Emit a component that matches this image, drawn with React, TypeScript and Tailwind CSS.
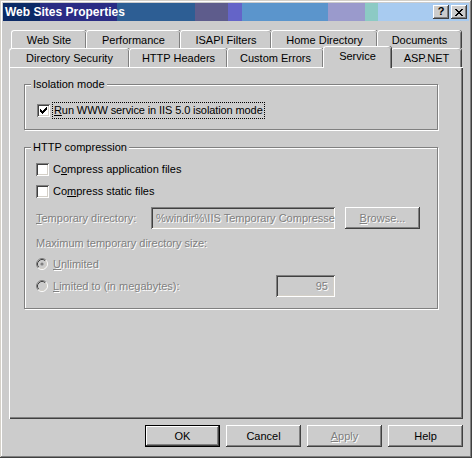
const face = "bg-[#cccccc]";
const raised =
  "shadow-[inset_-1px_-1px_0_#404040,inset_1px_1px_0_#ffffff,inset_-2px_-2px_0_#808080]";
const sunken =
  "shadow-[inset_1px_1px_0_#808080,inset_-1px_-1px_0_#ffffff,inset_2px_2px_0_#404040,inset_-2px_-2px_0_#d4d0c8]";
const disabledText = "text-[#808080] [text-shadow:1px_1px_0_#ffffff]";

function CheckMark() {
  const px = [
    [6, 0], [5, 1], [6, 1], [0, 2], [4, 2], [5, 2], [6, 2],
    [0, 3], [1, 3], [3, 3], [4, 3], [5, 3],
    [0, 4], [1, 4], [2, 4], [3, 4], [4, 4],
    [1, 5], [2, 5], [3, 5], [2, 6],
  ];
  return (
    <svg width="7" height="7" viewBox="0 0 7 7" shapeRendering="crispEdges">
      {px.map(([x, y]) => (
        <rect key={`${x}-${y}`} x={x} y={y} width="1" height="1" fill="#000" />
      ))}
    </svg>
  );
}

function Checkbox({ checked }: { checked?: boolean }) {
  return (
    <div className={`w-[13px] h-[13px] bg-white ${sunken} flex items-center justify-center shrink-0`}>
      {checked && <CheckMark />}
    </div>
  );
}

function Radio({ dot }: { dot?: boolean }) {
  return (
    <svg width="12" height="12" viewBox="0 0 12 12" className="shrink-0">
      <circle cx="6" cy="6" r="4.5" fill="#cccccc" />
      <path d="M2.11 9.89 A5.5 5.5 0 0 1 9.89 2.11" fill="none" stroke="#808080" />
      <path d="M9.89 2.11 A5.5 5.5 0 0 1 2.11 9.89" fill="none" stroke="#ffffff" />
      <path d="M2.82 9.18 A4.5 4.5 0 0 1 9.18 2.82" fill="none" stroke="#404040" />
      <path d="M9.18 2.82 A4.5 4.5 0 0 1 2.82 9.18" fill="none" stroke="#d4d0c8" />
      {dot && <circle cx="6" cy="6" r="1.6" fill="#808080" />}
    </svg>
  );
}

function Tab({ label, w }: { label: string; w: string }) {
  return (
    <div
      className={`${w} h-full rounded-t-[3px] border-t border-l border-white shadow-[inset_-1px_0_0_#808080,1px_0_0_#404040] flex justify-center pt-[3px] whitespace-nowrap`}
    >
      {label}
    </div>
  );
}

function Group({ title, h, children }: { title: string; h: string; children: React.ReactNode }) {
  return (
    <div
      className={`relative w-[414px] ${h} border border-[#808080] shadow-[inset_1px_1px_0_#ffffff,1px_1px_0_#ffffff]`}
    >
      <span className={`absolute -top-[8px] left-[6px] px-[2px] ${face} leading-[14px]`}>{title}</span>
      {children}
    </div>
  );
}

function Button({ children, isDefault, disabled }: { children: React.ReactNode; isDefault?: boolean; disabled?: boolean }) {
  return (
    <div
      className={`w-[75px] h-[22px] flex items-center justify-center ${
        isDefault
          ? "border border-black shadow-[inset_-1px_-1px_0_#404040,inset_1px_1px_0_#ffffff,inset_-2px_-2px_0_#808080]"
          : raised
      } ${disabled ? disabledText : ""}`}
    >
      {children}
    </div>
  );
}

export default function App() {
  return (
    <div
      className={`w-[472px] h-[458px] ${face} p-[3px] flex flex-col text-black text-[11px] leading-[13px] shadow-[inset_-1px_-1px_0_#404040,inset_1px_1px_0_#d4d0c8,inset_-2px_-2px_0_#808080,inset_2px_2px_0_#ffffff]`}
      style={{ fontFamily: '"Liberation Sans", Arial, sans-serif' }}
    >
      {/* title bar */}
      <div className="h-[18px] flex items-center pl-[2px] pr-[2px] bg-[linear-gradient(90deg,#0b2a66_0px,#0b2a66_37px,#2a2c84_37px,#2a2c84_114px,#2d5e94_114px,#2d5e94_192px,#5e5c8c_192px,#5e5c8c_225px,#6464c8_225px,#6464c8_239px,#5b95cc_239px,#5b95cc_325px,#9a9acc_325px,#9a9acc_362px,#8ccac4_362px,#8ccac4_375px,#a8cbf0_375px)]">
        <span className="font-bold text-white text-[12px]">Web Sites Properties</span>
        <div className="ml-auto flex gap-[2px]">
          <div className={`w-[16px] h-[14px] ${face} ${raised} flex items-center justify-center font-bold text-[11px] leading-none pb-[1px]`}>
            ?
          </div>
          <div className={`w-[16px] h-[14px] ${face} ${raised} flex items-center justify-center`}>
            <svg width="8" height="7" viewBox="0 0 8 7" shapeRendering="crispEdges">
              <path d="M0 0h2v1h-2zM6 0h2v1h-2zM1 1h2v1h-2zM5 1h2v1h-2zM2 2h4v1h-4zM3 3h2v1h-2zM2 4h4v1h-4zM1 5h2v1h-2zM5 5h2v1h-2zM0 6h2v1h-2zM6 6h2v1h-2z" fill="#000" />
            </svg>
          </div>
        </div>
      </div>

      {/* tabs */}
      <div className="mt-[9px] ml-[8px] flex h-[18px]">
        <Tab label="Web Site" w="w-[75px]" />
        <Tab label="Performance" w="w-[94px]" />
        <Tab label="ISAPI Filters" w="w-[91px]" />
        <Tab label="Home Directory" w="w-[106px]" />
        <Tab label="Documents" w="w-[84px]" />
      </div>
      <div className="ml-[6px] flex items-start h-[19px]">
        <Tab label="Directory Security" w="w-[120px]" />
        <Tab label="HTTP Headers" w="w-[98px]" />
        <Tab label="Custom Errors" w="w-[96px]" />
        <div
          className={`relative z-10 -mt-[2px] w-[68px] h-[22px] ${face} rounded-t-[3px] border-t border-l border-white shadow-[inset_-1px_0_0_#808080,1px_0_0_#404040] flex justify-center pt-[3px]`}
        >
          Service
        </div>
        <Tab label="ASP.NET" w="w-[70px]" />
      </div>

      {/* panel */}
      <div className="ml-[6px] w-[454px] h-[352px] pl-[15px] pt-[17px] flex flex-col shadow-[inset_1px_1px_0_#ffffff,inset_-1px_-1px_0_#404040,inset_-2px_-2px_0_#808080]">
        <Group title="Isolation mode" h="h-[46px]">
          <div className="flex items-center pl-[12px] mt-[17px] h-[17px]">
            <Checkbox checked />
            <div className="ml-[2px] border border-dotted border-black px-[1px] h-[17px] flex items-center">
              <span className="tracking-[-0.1px]">
                <span className="underline">R</span>un WWW service in IIS 5.0 isolation mode
              </span>
            </div>
          </div>
        </Group>

        <div className="mt-[17px]">
          <Group title="HTTP compression" h="h-[162px]">
            <div className="flex flex-col pl-[11px] pt-[10px]">
              <div className="h-[22px] flex items-center">
                <Checkbox />
                <span className="ml-[4px]">
                  C<span className="underline">o</span>mpress application files
                </span>
              </div>
              <div className="h-[22px] flex items-center">
                <Checkbox />
                <span className="ml-[4px]">
                  Co<span className="underline">m</span>press static files
                </span>
              </div>
              <div className="mt-[5px] h-[22px] flex items-center">
                <span className={`w-[115px] ${disabledText}`}>
                  <span className="underline">T</span>emporary directory:
                </span>
                <div className={`w-[184px] h-[22px] ${sunken} flex items-center pl-[5px] pr-[2px] overflow-hidden whitespace-nowrap`}>
                  <span className={disabledText}>%windir%\IIS Temporary Compresse</span>
                </div>
                <div className={`ml-[10px] w-[75px] h-[22px] ${raised} flex items-center justify-center ${disabledText}`}>
                  <span>
                    <span className="underline">B</span>rowse...
                  </span>
                </div>
              </div>
              <div className={`mt-[5px] h-[18px] flex items-center ${disabledText}`}>
                Maximum temporary directory size:
              </div>
              <div className="mt-[2px] h-[20px] flex items-center">
                <Radio dot />
                <span className={`ml-[5px] ${disabledText}`}>
                  <span className="underline">U</span>nlimited
                </span>
              </div>
              <div className="mt-[1px] h-[22px] flex items-center">
                <Radio />
                <span className={`ml-[5px] w-[223px] ${disabledText}`}>
                  <span className="underline">L</span>imited to (in megabytes):
                </span>
                <div className={`w-[59px] h-[22px] ${sunken} flex items-center justify-end pr-[7px]`}>
                  <span className={disabledText}>95</span>
                </div>
              </div>
            </div>
          </Group>
        </div>
      </div>

      {/* buttons */}
      <div className="mt-[6px] mr-[6px] flex justify-end gap-[6px]">
        <Button isDefault>OK</Button>
        <Button>Cancel</Button>
        <Button disabled>
          <span>
            <span className="underline">A</span>pply
          </span>
        </Button>
        <Button>Help</Button>
      </div>
    </div>
  );
}
